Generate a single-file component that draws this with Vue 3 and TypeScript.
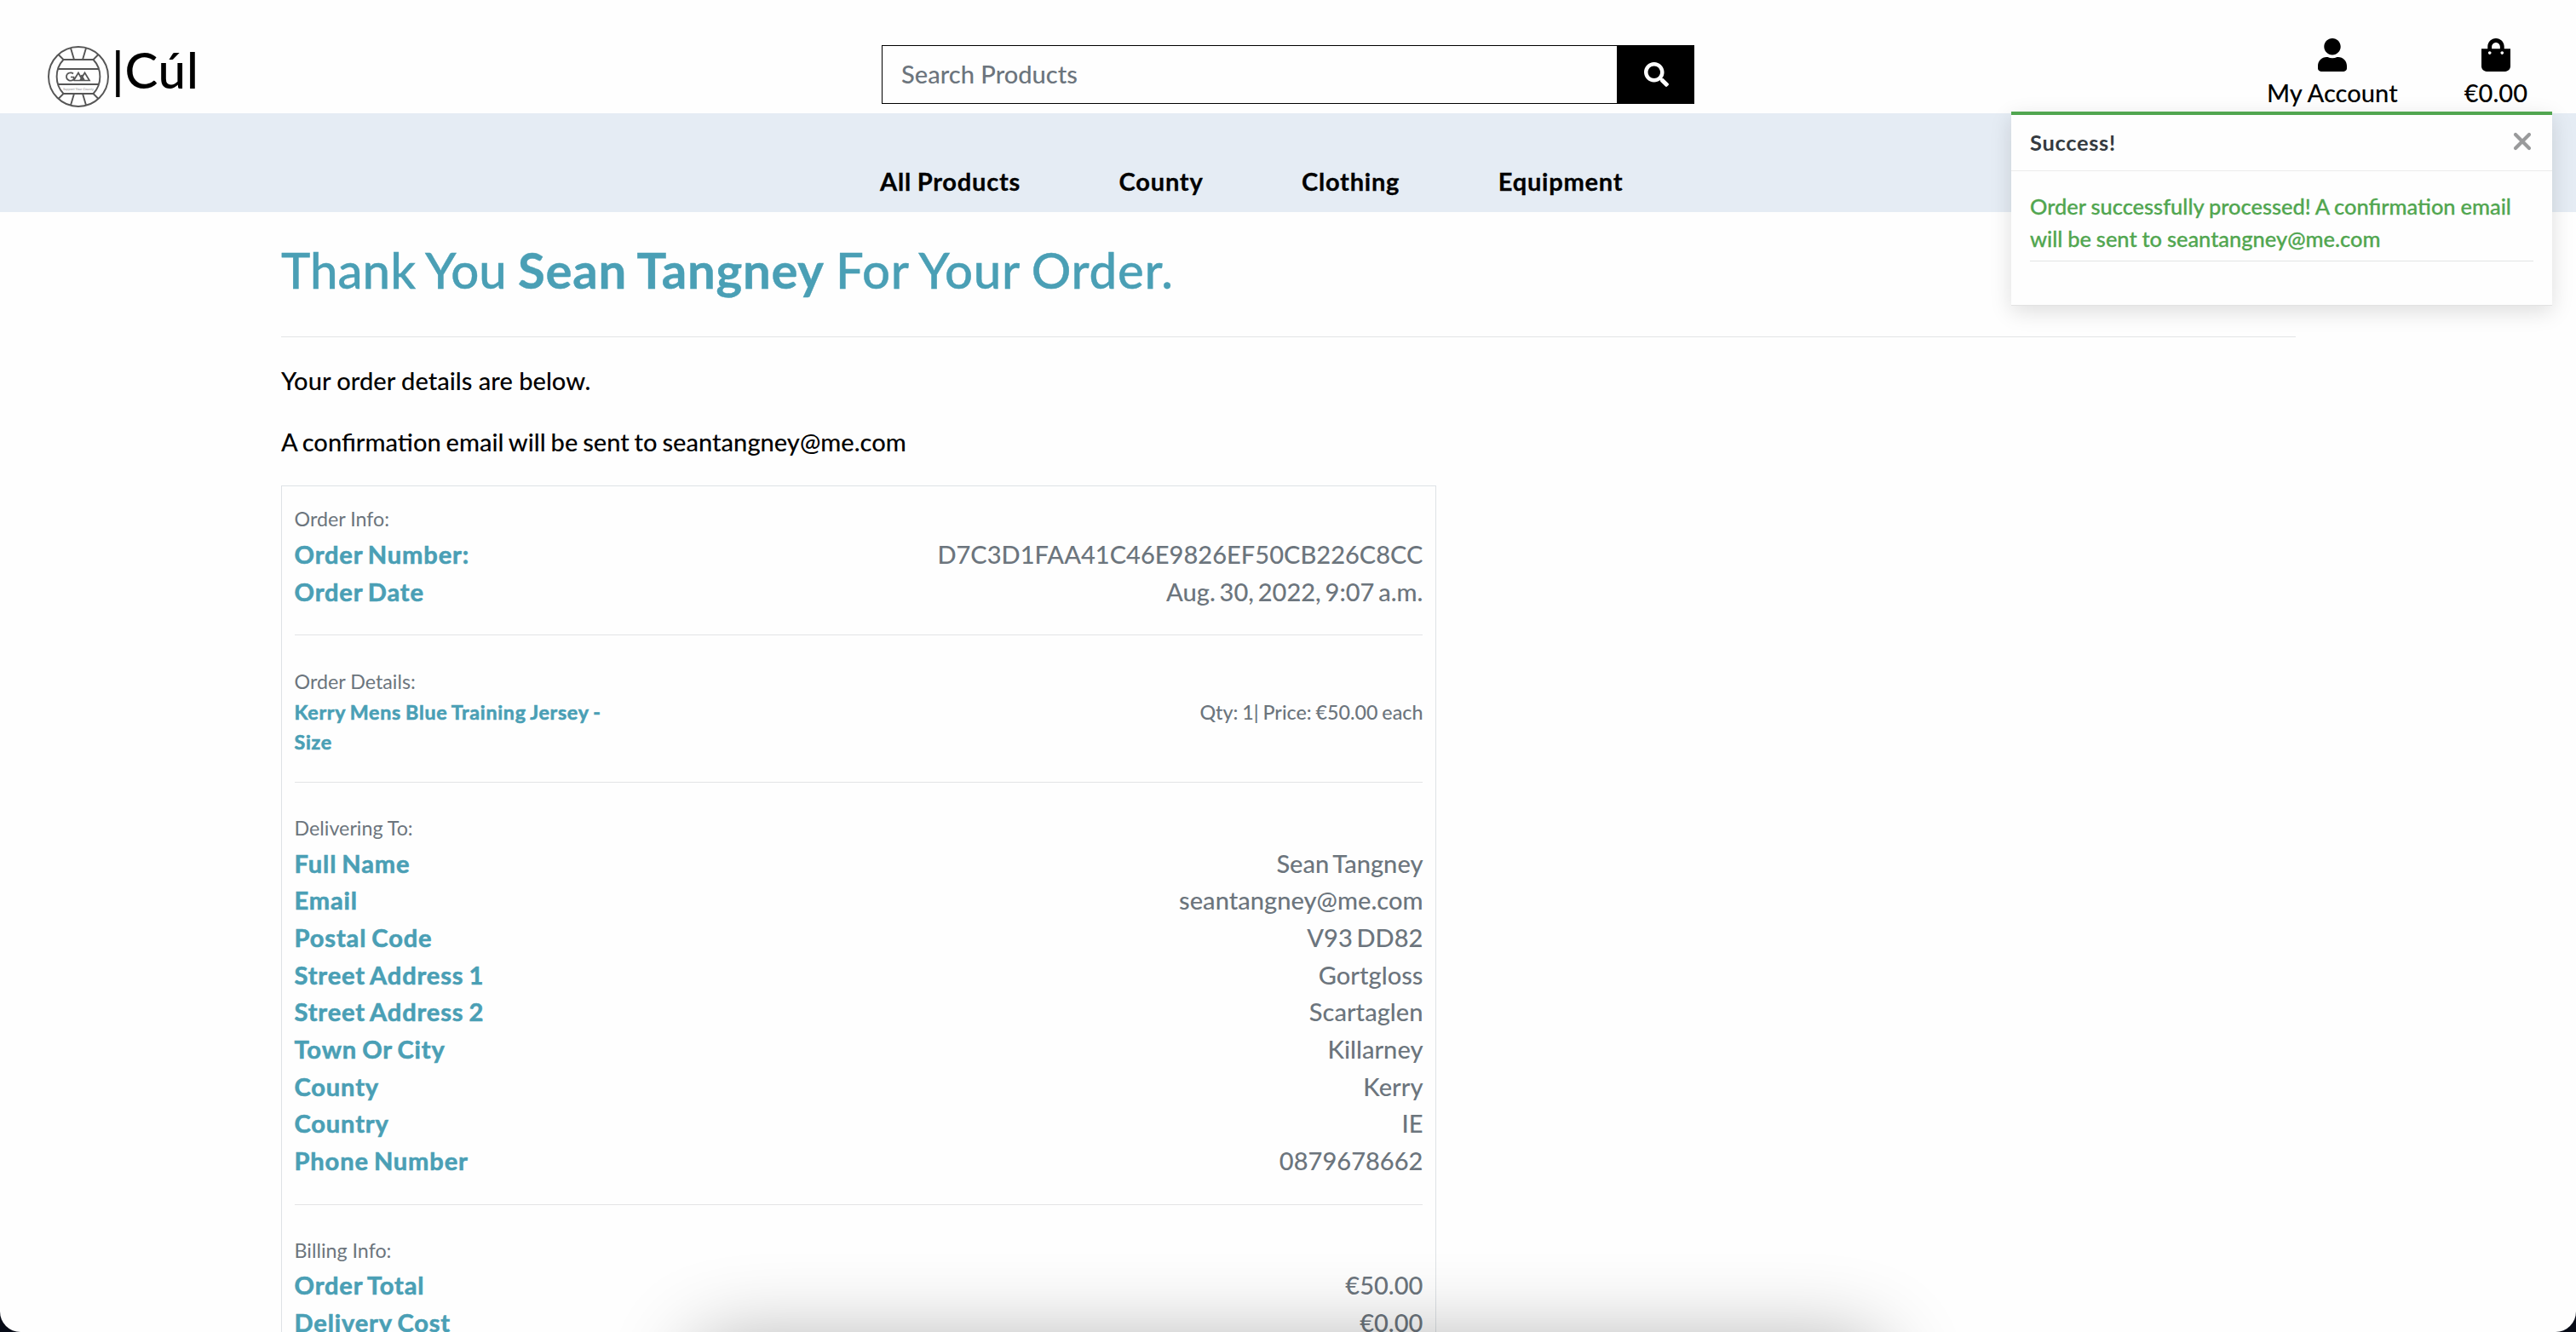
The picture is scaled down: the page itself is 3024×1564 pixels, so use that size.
<script setup lang="ts">
interface Row {
  label: string
  value: string
}

interface Section {
  title: string
  compact?: boolean
  rows: Row[]
}

const navLinks: string[] = ['All Products', 'County', 'Clothing', 'Equipment']

const email = 'seantangney@me.com'

const sections: Section[] = [
  {
    title: 'Order Info:',
    rows: [
      { label: 'Order Number:', value: 'D7C3D1FAA41C46E9826EF50CB226C8CC' },
      { label: 'Order Date', value: 'Aug. 30, 2022, 9:07 a.m.' },
    ],
  },
  {
    title: 'Order Details:',
    compact: true,
    rows: [{ label: 'Kerry Mens Blue Training Jersey - Size', value: 'Qty: 1| Price: €50.00 each' }],
  },
  {
    title: 'Delivering To:',
    rows: [
      { label: 'Full Name', value: 'Sean Tangney' },
      { label: 'Email', value: email },
      { label: 'Postal Code', value: 'V93 DD82' },
      { label: 'Street Address 1', value: 'Gortgloss' },
      { label: 'Street Address 2', value: 'Scartaglen' },
      { label: 'Town Or City', value: 'Killarney' },
      { label: 'County', value: 'Kerry' },
      { label: 'Country', value: 'IE' },
      { label: 'Phone Number', value: '0879678662' },
    ],
  },
  {
    title: 'Billing Info:',
    rows: [
      { label: 'Order Total', value: '€50.00' },
      { label: 'Delivery Cost', value: '€0.00' },
    ],
  },
]
</script>

<template>
  <div class="page">
    <header class="topbar">
      <a class="brand">
        <svg class="ball" viewBox="0 0 74 74" fill="none" stroke="#555" stroke-width="1.9">
          <circle cx="37" cy="37" r="35" />
          <path d="M19.500 17H54.500C65 28 65 46 54.500 57H19.500C9 46 9 28 19.500 17Z" />
          <path d="M13 28H61M13 46H61" />
          <path d="M28 3.500L32 17M46 3.500L42 17M28 70.500L32 57M46 70.500L42 57" />
          <path d="M13.500 11L19.500 17M60.500 11L54.500 17M13.500 63L19.500 57M60.500 63L54.500 57" />
          <path
            d="M31 33.500C28 31 23 33 23 37C23 41.500 28 43 31.500 40.500V37.500H28M31.500 41.500L37 32.500L42 41.500H31.500M39 41.500L44.500 32.500L50 41.500H44L40.500 35"
            stroke-width="1.700"
          />
          <text x="37" y="52.500" text-anchor="middle">Support Your County</text>
        </svg>
        <h2 class="brand-name">|Cúl</h2>
      </a>

      <form class="search">
        <div class="field">Search Products</div>
        <div class="go">
          <svg viewBox="0 0 512 512" fill="#fff">
            <path
              d="M505 442.700L405.300 343c-4.500-4.500-10.600-7-17-7H372c27.600-35.300 44-79.700 44-128C416 93.100 322.900 0 208 0S0 93.100 0 208s93.100 208 208 208c48.300 0 92.700-16.400 128-44v16.300c0 6.400 2.500 12.500 7 17l99.700 99.700c9.400 9.400 24.600 9.400 33.900 0l28.300-28.300c9.400-9.400 9.400-24.600.1-34zM208 336c-70.700 0-128-57.200-128-128 0-70.700 57.200-128 128-128 70.700 0 128 57.200 128 128 0 70.700-57.200 128-128 128z"
            />
          </svg>
        </div>
      </form>

      <div class="tools">
        <a class="tool">
          <svg viewBox="0 0 448 512">
            <path
              d="M224 256c70.700 0 128-57.300 128-128S294.700 0 224 0 96 57.300 96 128s57.300 128 128 128zm89.600 32h-16.700c-22.200 10.200-46.900 16-72.900 16s-50.600-5.800-72.900-16h-16.700C60.200 288 0 348.200 0 422.400V464c0 26.500 21.500 48 48 48h352c26.500 0 48-21.500 48-48v-41.600c0-74.200-60.200-134.400-134.400-134.400z"
            />
          </svg>
          <span>My Account</span>
        </a>
        <a class="tool">
          <svg viewBox="0 0 448 512">
            <path
              d="M352 160v-32C352 57.420 294.579 0 224 0 153.420 0 96 57.420 96 128v32H0v272c0 44.183 35.817 80 80 80h288c44.183 0 80-35.817 80-80V160h-96zm-192-32c0-35.290 28.710-64 64-64s64 28.710 64 64v32H160v-32zm160 120c-13.255 0-24-10.745-24-24s10.745-24 24-24 24 10.745 24 24-10.745 24-24 24zm-192 0c-13.255 0-24-10.745-24-24s10.745-24 24-24 24 10.745 24 24-10.745 24-24 24z"
            />
          </svg>
          <span>€0.00</span>
        </a>
      </div>
    </header>

    <nav class="menu">
      <a v-for="link in navLinks" :key="link">{{ link }}</a>
    </nav>

    <main class="content">
      <h2 class="thanks">Thank You <strong>Sean Tangney</strong> <span>For Your Order.</span></h2>
      <hr />
      <p>Your order details are below.</p>
      <p class="sent">A confirmation email will be sent to {{ email }}</p>

      <div class="card">
        <template v-for="(section, i) in sections" :key="section.title">
          <hr v-if="i > 0" />
          <section :class="{ compact: section.compact }">
            <div class="title"><small>{{ section.title }}</small></div>
            <div v-for="row in section.rows" :key="row.label" class="row">
              <strong>{{ row.label }}</strong>
              <span>{{ row.value }}</span>
            </div>
          </section>
        </template>
      </div>
    </main>

    <aside class="toast">
      <div class="toast-head">
        <strong>Success!</strong>
        <svg viewBox="0 0 22 22" stroke="#999a9b" stroke-width="4.200" stroke-linecap="round">
          <path d="M3 3L19 19M19 3L3 19" />
        </svg>
      </div>
      <div class="toast-body">
        <p>Order successfully processed! A confirmation email will be sent to {{ email }}</p>
        <hr />
      </div>
    </aside>

    <div class="dock-shadow"></div>
  </div>
</template>

<style>
html {
  font-size: 29.090px;
  background: #070b17;
}
body {
  margin: 0;
  overflow: hidden;
}
</style>

<style scoped>
.page {
  position: relative;
  width: 3024px;
  height: 1564px;
  overflow: hidden;
  box-sizing: border-box;
  background: #fefefe;
  border-radius: 0 0 24px 24px;
  font-family: Lato, 'Liberation Sans', sans-serif;
  font-size: 1rem;
  font-weight: 500;
  line-height: 1.5;
  color: #000;
}
h2,
p {
  margin: 0;
}
strong {
  font-weight: 700;
}
hr {
  margin: 1rem 0;
  border: 0;
  height: 1px;
  background: #e3e4e5;
}
.topbar {
  height: 133px;
  display: grid;
  grid-template-columns: 1035px 954px 1fr;
}
.brand {
  display: flex;
  padding: 47px 0 0 55px;
}
.ball {
  width: 74px;
  height: 74px;
  margin-top: 6px;
}
.ball text {
  font-size: 4.200px;
  font-style: italic;
  fill: #999;
  stroke: none;
}
.brand-name {
  margin-left: 2px;
  font-size: 2rem;
  font-weight: 500;
  line-height: 1.2;
  letter-spacing: 0.8px;
}
.search {
  margin-top: 53px;
  height: 69px;
  display: flex;
}
.field {
  flex: 1;
  box-sizing: border-box;
  border: 1px solid #000;
  padding: 11px 22px;
  color: #6c757d;
}
.go {
  width: 90px;
  background: #000;
  display: flex;
  align-items: center;
  justify-content: center;
}
.go svg {
  width: 29px;
  height: 29px;
}
.tools {
  display: flex;
  justify-content: flex-end;
  padding: 45px 57px 0 0;
  gap: 78px;
}
.tool {
  display: flex;
  flex-direction: column;
  align-items: center;
}
.tool svg {
  width: 34px;
  height: 39px;
}
.tool span {
  margin-top: 3px;
}
.menu {
  height: 116px;
  box-sizing: border-box;
  padding: 58px 0 0 1033px;
  background: #e5ecf4;
  display: flex;
  gap: 115.500px;
  font-weight: 700;
  letter-spacing: 0.75px;
  word-spacing: -1px;
  -webkit-text-stroke: 0.3px currentColor;
}
.content {
  width: 2365px;
  margin-left: 330px;
  padding-top: 32.500px;
}
.thanks {
  font-size: 2rem;
  font-weight: 500;
  line-height: 1.2;
  padding-bottom: 0.5rem;
  color: #4a9fb5;
  word-spacing: -1.5px;
  -webkit-text-stroke: 0.4px currentColor;
}
.thanks strong {
  letter-spacing: 0.7px;
}
.thanks span {
  letter-spacing: 0.7px;
}
.content > p {
  margin-bottom: 1rem;
}
.content > .sent {
  word-spacing: -1.500px;
  margin-top: -0.5px;
}
.card {
  width: 1356px;
  box-sizing: border-box;
  border: 1px solid #dee2e6;
  padding: 0.5rem;
}
.title {
  height: 1.500rem;
  font-weight: 400;
  color: #6c757d;
}
.title small {
  font-size: 80%;
}
.row {
  display: flex;
  justify-content: space-between;
}
.row strong {
  color: #4a9fb5;
  letter-spacing: 0.85px;
  word-spacing: -1.8px;
  -webkit-text-stroke: 0.6px currentColor;
}
.row span {
  color: #6c757d;
  word-spacing: -2.6px;
}
.compact .row {
  font-size: 80%;
}
.compact .row strong {
  width: 400px;
  letter-spacing: 0.7px;
  word-spacing: -1.2px;
}
.compact .row span {
  word-spacing: -1px;
}
.toast {
  position: absolute;
  top: 131px;
  left: 2361px;
  width: 635px;
  height: 228px;
  box-sizing: border-box;
  border: 1px solid #e2e2e2;
  border-width: 4px 0 1px;
  border-top-color: #51a650;
  background: #fefefe;
  box-shadow: 0 7px 24px rgba(0, 0, 0, 0.13);
  font-size: 0.875rem;
}
.toast-head {
  height: 65px;
  padding: 0 24px 0 22px;
  border-bottom: 1px solid #ececec;
  display: flex;
  align-items: center;
  justify-content: space-between;
  color: #343a40;
}
.toast-head strong {
  letter-spacing: 0.7px;
}
.toast-head svg {
  width: 22px;
  height: 22px;
  margin-bottom: 3px;
}
.toast-body {
  padding: 22px;
  color: #51a650;
}
.toast-body p {
  word-spacing: -0.6px;
  -webkit-text-stroke: 0.3px currentColor;
}
.toast-body hr {
  margin: 7px 0 0;
}
.dock-shadow {
  position: absolute;
  left: 812px;
  top: 1572px;
  width: 1400px;
  height: 140px;
  border-radius: 40px;
  box-shadow: 0 0 96px rgba(0, 0, 0, 0.300);
}
</style>
